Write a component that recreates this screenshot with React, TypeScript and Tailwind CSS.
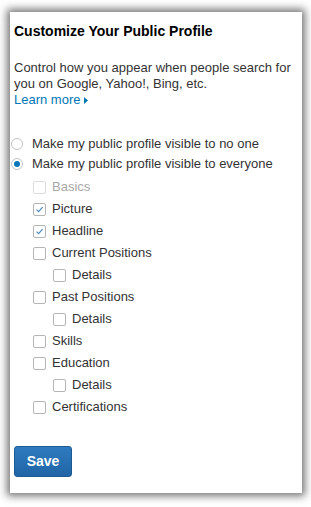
import React from "react";

function Box({ checked = false, disabled = false }: { checked?: boolean; disabled?: boolean }) {
  return (
    <span
      className={`flex h-[13px] w-[13px] shrink-0 items-center justify-center rounded-[2px] border bg-white ${
        disabled ? "border-[#dcdcdc]" : "border-[#b5b5b5]"
      }`}
    >
      {checked && (
        <svg width="9" height="9" viewBox="0 0 9 9" fill="none">
          <path d="M1.5 4.6 L3.6 6.6 L7.6 2.2" stroke="#4a8cc4" strokeWidth="1.2" />
        </svg>
      )}
    </span>
  );
}

function Row({
  label,
  checked,
  disabled,
  nested,
}: {
  label: string;
  checked?: boolean;
  disabled?: boolean;
  nested?: boolean;
}) {
  return (
    <label className={`flex h-[22px] items-center gap-[6px] ${nested ? "pl-[39px]" : "pl-[19px]"}`}>
      <Box checked={checked} disabled={disabled} />
      <span className={disabled ? "text-[#a8a8a8]" : "text-[#333]"}>{label}</span>
    </label>
  );
}

function Radio({ checked, label }: { checked?: boolean; label: string }) {
  return (
    <label className="-ml-[3px] flex h-[20px] items-center gap-[9px]">
      <span className="flex h-[12px] w-[12px] items-center justify-center rounded-full border border-[#c4c4c4] bg-white">
        {checked && <span className="h-[6px] w-[6px] rounded-full bg-[#0a77b8]" />}
      </span>
      <span className="text-[#333]">{label}</span>
    </label>
  );
}

export default function App() {
  return (
    <div className="h-[507px] w-[311px] bg-white pl-[10px] pt-[12px]" style={{ fontFamily: '"Liberation Sans", Arial, sans-serif' }}>
      <div className="flex h-[481px] w-[292px] flex-col bg-white px-[4px] pt-[10px] text-[13px] shadow-[0_0_8px_3px_rgba(0,0,0,0.55)]">
        <h1 className="text-[14px] font-bold leading-[18px] text-black">Customize Your Public Profile</h1>

        <p className="mt-[20px] leading-[16px] text-[#333]">
          Control how you appear when people search for you on Google, Yahoo!, Bing, etc.
          <br />
          <a href="#" className="inline-flex items-center gap-[4px] text-[#0077b5]">
            Learn more
            <svg width="4" height="7" viewBox="0 0 4 7">
              <path d="M0 0 L4 3.5 L0 7 Z" fill="#0077b5" />
            </svg>
          </a>
        </p>

        <div className="mt-[26px] flex flex-col">
          <Radio label="Make my public profile visible to no one" />
          <Radio checked label="Make my public profile visible to everyone" />
        </div>

        <div className="mt-[2px] flex flex-col">
          <Row label="Basics" disabled />
          <Row label="Picture" checked />
          <Row label="Headline" checked />
          <Row label="Current Positions" />
          <Row label="Details" nested />
          <Row label="Past Positions" />
          <Row label="Details" nested />
          <Row label="Skills" />
          <Row label="Education" />
          <Row label="Details" nested />
          <Row label="Certifications" />
        </div>

        <div className="mt-[28px]">
          <button className="h-[31px] w-[58px] rounded-[3px] border border-[#1d5a92] bg-gradient-to-b from-[#2f7bbf] to-[#1f65a6] text-[14px] font-bold text-white">
            Save
          </button>
        </div>
      </div>
    </div>
  );
}
